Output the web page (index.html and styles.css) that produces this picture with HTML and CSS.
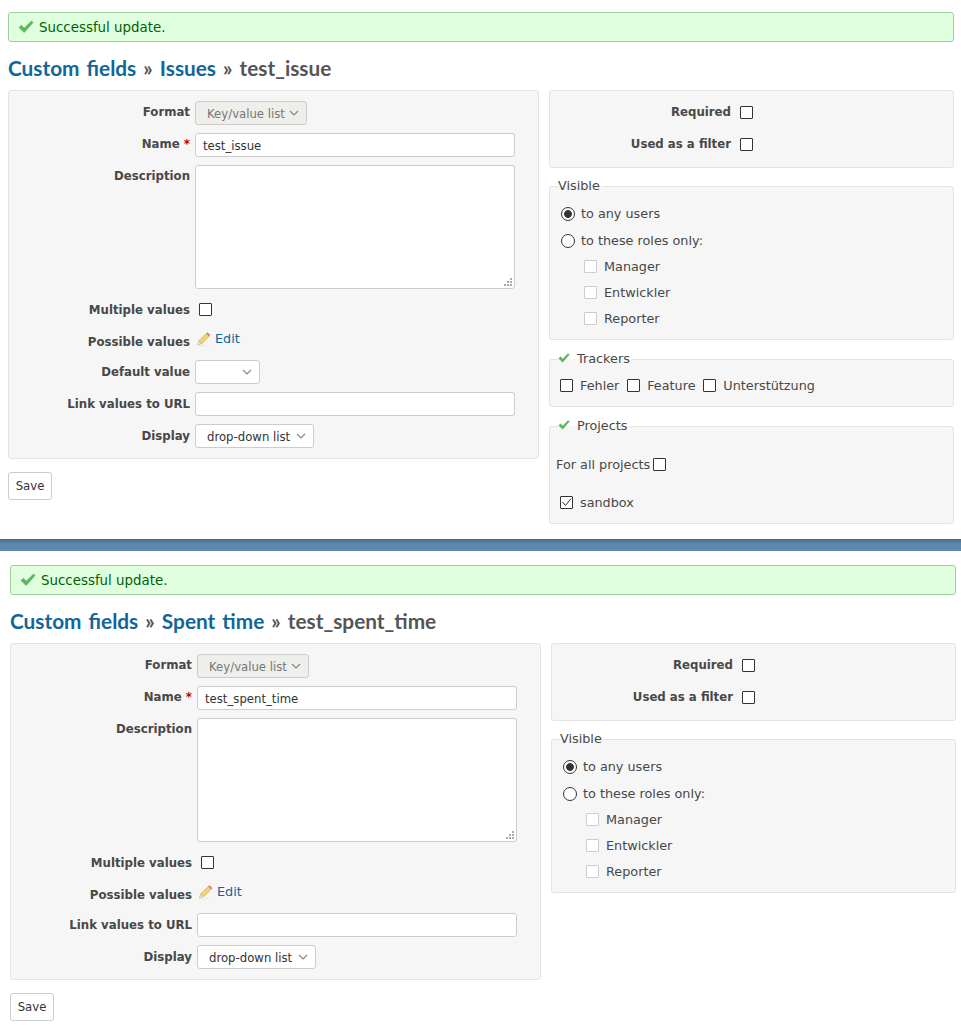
FILE: index.html
```html
<!DOCTYPE html>
<html lang="en">
    <head>
        <meta charset="UTF-8" />
        <title>Custom fields</title>
        <link rel="stylesheet" href="styles.css">
    </head>
    <body>
        <svg class="defs" width="0" height="0">
            <symbol id="check" viewBox="0 0 16 16">
                <path d="M1 8.500l2.500-2.200 2.700 3L13.500 2l1.500 1.500-8.800 10z" fill="#5cb85c" stroke="#4a9a4a" stroke-width="0.5" />
            </symbol>
            <symbol id="pencil" viewBox="0 0 16 16">
                <path d="M1 14.500l6 1 8-1-5-1z" fill="#ecece6" />
                <path d="M3 9.500L11 1.500l3 3L6 12.500z" fill="#f5d56e" stroke="#c9a040" stroke-width="0.7" />
                <path d="M11 1.500l1.200-1.200 3 3L14 4.500z" fill="#e0707a" />
                <path d="M1.500 14l1.500-4.500 3 3z" fill="#f5e6c8" stroke="#b9a070" stroke-width="0.5" />
            </symbol>
        </svg>

        <div class="screen">
            <div class="flash"><svg class="icon"><use href="#check" /></svg>Successful update.</div>
            <h2 class="title"><a href="#">Custom fields</a> » <a href="#">Issues</a> » test_issue</h2>
            <div class="columns">
                <div class="left">
                    <div class="box form-box">
                        <p class="row"><label>Format</label><select class="select format" disabled><option>Key/value list</option></select></p>
                        <p class="row"><label>Name <em>*</em></label><input type="text" class="text" value="test_issue" /></p>
                        <p class="row"><label>Description</label><textarea class="area"></textarea></p>
                        <p class="row row-check"><label>Multiple values</label><input type="checkbox" class="check" /></p>
                        <p class="row row-edit"><label>Possible values</label><a href="#" class="edit"><svg class="pencil"><use href="#pencil" /></svg>Edit</a></p>
                        <p class="row low"><label>Default value</label><select class="select blank"><option></option></select></p>
                        <p class="row low"><label>Link values to URL</label><input type="text" class="text" /></p>
                        <p class="row low"><label>Display</label><select class="select display"><option>drop-down list</option></select></p>
                    </div>
                    <button class="save">Save</button>
                </div>
                <div class="right">
                    <div class="box flags">
                        <p class="flag"><label>Required</label><input type="checkbox" class="check" /></p>
                        <p class="flag"><label>Used as a filter</label><input type="checkbox" class="check" /></p>
                    </div>
                    <fieldset class="box group visible">
                        <legend>Visible</legend>
                        <label class="opt"><input type="radio" class="radio" name="v1" checked />to any users</label>
                        <label class="opt"><input type="radio" class="radio" name="v1" />to these roles only:</label>
                        <label class="role"><input type="checkbox" class="check off" disabled />Manager</label>
                        <label class="role"><input type="checkbox" class="check off" disabled />Entwickler</label>
                        <label class="role"><input type="checkbox" class="check off" disabled />Reporter</label>
                    </fieldset>
                    <fieldset class="box group trackers">
                        <legend><svg class="icon small"><use href="#check" /></svg>Trackers</legend>
                        <label><input type="checkbox" class="check" />Fehler</label>
                        <label><input type="checkbox" class="check" />Feature</label>
                        <label><input type="checkbox" class="check" />Unterstützung</label>
                    </fieldset>
                    <fieldset class="box group projects">
                        <legend><svg class="icon small"><use href="#check" /></svg>Projects</legend>
                        <p class="all">For all projects <input type="checkbox" class="check" /></p>
                        <label class="project"><input type="checkbox" class="check" checked />sandbox</label>
                    </fieldset>
                </div>
            </div>
        </div>

        <div class="divider"></div>

        <div class="screen second">
            <div class="flash"><svg class="icon"><use href="#check" /></svg>Successful update.</div>
            <h2 class="title"><a href="#">Custom fields</a> » <a href="#">Spent time</a> » test_spent_time</h2>
            <div class="columns">
                <div class="left">
                    <div class="box form-box">
                        <p class="row"><label>Format</label><select class="select format" disabled><option>Key/value list</option></select></p>
                        <p class="row"><label>Name <em>*</em></label><input type="text" class="text" value="test_spent_time" /></p>
                        <p class="row"><label>Description</label><textarea class="area"></textarea></p>
                        <p class="row row-check"><label>Multiple values</label><input type="checkbox" class="check" /></p>
                        <p class="row row-edit"><label>Possible values</label><a href="#" class="edit"><svg class="pencil"><use href="#pencil" /></svg>Edit</a></p>
                        <p class="row low"><label>Link values to URL</label><input type="text" class="text" /></p>
                        <p class="row low"><label>Display</label><select class="select display"><option>drop-down list</option></select></p>
                    </div>
                    <button class="save">Save</button>
                </div>
                <div class="right">
                    <div class="box flags">
                        <p class="flag"><label>Required</label><input type="checkbox" class="check" /></p>
                        <p class="flag"><label>Used as a filter</label><input type="checkbox" class="check" /></p>
                    </div>
                    <fieldset class="box group visible">
                        <legend>Visible</legend>
                        <label class="opt"><input type="radio" class="radio" name="v2" checked />to any users</label>
                        <label class="opt"><input type="radio" class="radio" name="v2" />to these roles only:</label>
                        <label class="role"><input type="checkbox" class="check off" disabled />Manager</label>
                        <label class="role"><input type="checkbox" class="check off" disabled />Entwickler</label>
                        <label class="role"><input type="checkbox" class="check off" disabled />Reporter</label>
                    </fieldset>
                </div>
            </div>
        </div>
    </body>
</html>
```

FILE: styles.css
```css
* {
    box-sizing: border-box;
    margin: 0;
    padding: 0;
}
body {
    background: #fff;
    color: #484848;
    font-family: 'DejaVu Sans', sans-serif;
    font-size: 12px;
    overflow: hidden;
}
a {
    color: #169;
    text-decoration: none;
}
.defs {
    position: absolute;
}
.screen {
    height: 539px;
    width: 946px;
    margin-left: 8px;
    padding-top: 12px;
}
.second {
    height: 478px;
    margin-left: 10px;
    padding-top: 14px;
}
.divider {
    height: 12px;
    background: linear-gradient(#476a8a, #5c87ad 40%, #5f88ae);
}
.flash {
    height: 30px;
    display: flex;
    align-items: center;
    padding-left: 9px;
    background: #dfffdf;
    border: 1px solid #9fcf9f;
    border-radius: 3px;
    color: #005f00;
    font-size: 13.400px;
}
.icon {
    width: 16px;
    height: 16px;
    margin-right: 5px;
}
.icon.small {
    width: 12px;
    height: 12px;
    margin-right: 7px;
    vertical-align: -1px;
}
.title {
    height: 48px;
    padding-top: 14px;
    font-family: Lato, sans-serif;
    font-size: 20.800px;
    word-spacing: 2px;
    line-height: 24px;
    font-weight: 700;
    color: #555;
}
.columns {
    display: flex;
    gap: 10px;
}
.left {
    width: 531px;
}
.right {
    width: 405px;
}
.box {
    background: #f6f6f6;
    border: 1px solid #e4e4e4;
    border-radius: 3px;
}
.form-box {
    padding: 10px 23px 10px 0;
}
.row {
    display: flex;
    align-items: flex-start;
    margin-bottom: 8px;
}
.row:last-child {
    margin-bottom: 0;
}
.row label {
    width: 181px;
    margin-right: 5px;
    padding-top: 1px;
    text-align: right;
    font-weight: 700;
    font-size: 11.750px;
    line-height: 20px;
}
.row.low label {
    padding-top: 2px;
}
.row em {
    color: #bb0000;
    font-style: normal;
}
.text {
    width: 320px;
    height: 24px;
    padding: 1px 7px 0;
    background: #fff;
    border: 1px solid #ccc;
    border-radius: 3px;
    color: #333;
    font: 11.700px 'DejaVu Sans', sans-serif;
}
.area {
    display: block;
    width: 320px;
    height: 124px;
    background: #fff url("data:image/svg+xml,%3Csvg xmlns='http://www.w3.org/2000/svg' width='9' height='9'%3E%3Cpath d='M6 0h2v2H6zM3 3h2v2H3zM6 3h2v2H6zM0 6h2v2H0zM3 6h2v2H3zM6 6h2v2H6z' fill='%23aaa'/%3E%3C/svg%3E") no-repeat right 1px bottom 1px;
    border: 1px solid #ccc;
    border-radius: 3px;
    resize: none;
}
.select {
    height: 24px;
    padding: 1px 18px 0 11px;
    appearance: none;
    background: #fff url("data:image/svg+xml,%3Csvg xmlns='http://www.w3.org/2000/svg' width='10' height='6'%3E%3Cpath d='M1 1l4 4 4-4' fill='none' stroke='%23888' stroke-width='1.200'/%3E%3C/svg%3E") no-repeat right 7px center;
    border: 1px solid #ccc;
    border-radius: 3px;
    color: #333;
    font: 11.700px 'DejaVu Sans', sans-serif;
    opacity: 1;
}
.format {
    width: 112px;
    background-color: #eeeeea;
    color: #777;
}
.blank {
    width: 65px;
}
.display {
    width: 119px;
}
.check {
    width: 13px;
    height: 13px;
    flex: none;
    appearance: none;
    background: #fff;
    border: 1px solid #333;
    border-radius: 1px;
}
.check:checked {
    background: #fff url("data:image/svg+xml,%3Csvg xmlns='http://www.w3.org/2000/svg' width='11' height='11'%3E%3Cpath d='M1.500 5l3 3.500L10 1.500' fill='none' stroke='%23333' stroke-width='1'/%3E%3C/svg%3E") no-repeat center;
}
.check.off {
    border-color: #ccc;
}
.radio {
    width: 14px;
    height: 14px;
    flex: none;
    appearance: none;
    background: #fff;
    border: 1px solid #333;
    border-radius: 50%;
}
.radio:checked {
    background: radial-gradient(circle, #333 0 3.500px, #fff 4.200px);
}
.row-check {
    margin-top: 14px;
    margin-bottom: 12px;
    height: 14px;
}
.row-check label {
    margin-top: -4px;
}
.row-check .check {
    margin-left: 4px;
}
.row-edit {
    height: 24px;
    margin-bottom: 7px;
    padding-top: 2px;
}
.edit {
    font-size: 12.800px;
    display: flex;
    align-items: center;
    line-height: 16px;
    margin-left: 1px;
}
.pencil {
    width: 15px;
    height: 15px;
    margin-right: 4px;
}
.save {
    display: block;
    margin-top: 13px;
    width: 44px;
    height: 28px;
    background: #fff;
    border: 1px solid #ccc;
    border-radius: 3px;
    color: #333;
    font: 11.700px 'DejaVu Sans', sans-serif;
}
.flags {
    height: 78px;
    padding-top: 10px;
}
.flag {
    display: flex;
    height: 20px;
    margin-bottom: 12px;
}
.flag label {
    width: 181px;
    margin-right: 9px;
    padding-top: 1px;
    text-align: right;
    font-weight: 700;
    font-size: 11.750px;
    line-height: 20px;
}
.flag .check {
    margin-top: 5px;
}
.group {
    margin-top: 11px;
    padding: 6px 7px 0;
}
.group legend {
    font-size: 12.800px;
    line-height: 16px;
    padding-right: 2px;
    margin-left: 1px;
}
.visible {
    margin-top: 10px;
    height: 162px;
}
.opt,
.role {
    display: flex;
    align-items: center;
    gap: 6px;
    font-size: 12.800px;
    height: 26px;
    padding-left: 4px;
}
.opt {
    height: 27px;
}
.opt + .role {
    margin-top: -1px;
}
.role {
    padding-left: 27px;
    gap: 7px;
}
.trackers {
    height: 56px;
    padding-top: 11px;
}
.trackers label {
    font-size: 12.800px;
    margin-right: 1px;
    display: inline-flex;
    align-items: center;
    gap: 7px;
    margin-left: 3px;
}
.projects {
    height: 106px;
}
.all {
    font-size: 12.800px;
    display: flex;
    align-items: center;
    gap: 3px;
    height: 20px;
    margin-top: 14px;
    margin-left: -1px;
}
.project {
    font-size: 12.800px;
    display: flex;
    align-items: center;
    gap: 7px;
    height: 20px;
    margin-top: 18px;
    margin-left: 3px;
}
```
